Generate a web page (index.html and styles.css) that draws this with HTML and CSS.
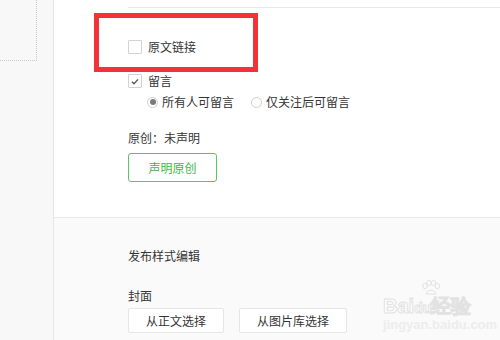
FILE: index.html
```html
<!DOCTYPE html>
<html lang="zh">
<head>
<meta charset="utf-8">
<link rel="stylesheet" href="styles.css">
</head>
<body>
<div class="page">
  <aside class="side"><div class="dotbox"></div></aside>
  <main class="main">
    <div class="highlight"></div>
    <section class="top">
      <div class="rule"></div>
      <label class="row row-link"><span class="box"></span><span>原文链接</span></label>
      <label class="row row-comment"><span class="box checked"><svg viewBox="0 0 13 13" width="13" height="13"><path d="M3.2 6.8 L5.4 9 L9.8 4.2" fill="none" stroke="#555" stroke-width="1.4"/></svg></span><span>留言</span></label>
      <div class="row radios">
        <span class="radio on"></span><span class="rtext">所有人可留言</span>
        <span class="radio"></span><span class="rtext">仅关注后可留言</span>
      </div>
      <div class="row orig">原创：未声明</div>
      <button class="btn-green">声明原创</button>
    </section>
    <section class="bottom">
      <div class="row heading">发布样式编辑</div>
      <div class="row cover">封面</div>
      <div class="btns">
        <button class="btn btn-a">从正文选择</button>
        <button class="btn btn-b">从图片库选择</button>
      </div>
      <div class="watermark">
        <svg class="wm-paw" viewBox="0 0 20 16" width="20" height="16"><g fill="none" stroke="#e2e2e2" stroke-width="1"><ellipse cx="4" cy="6" rx="2.2" ry="2.8"/><ellipse cx="8" cy="3" rx="2.2" ry="2.6"/><ellipse cx="12.5" cy="3" rx="2.2" ry="2.6"/><ellipse cx="16.3" cy="6" rx="2.2" ry="2.8"/><path d="M5 14 C6 9 14 9 15 14 Z"/></g></svg>
        <span class="wm-logo">Bai<span class="wm-du">du</span>经验</span>
        <span class="wm-url">jingyan.baidu.com</span>
      </div>
    </section>
  </main>
</div>
</body>
</html>
```

FILE: styles.css
```css
* { box-sizing: border-box; }
html, body { margin: 0; padding: 0; }
body {
  width: 500px;
  height: 340px;
  overflow: hidden;
  font-family: "Noto Sans CJK SC", "Noto Sans", sans-serif;
  font-size: 12px;
  color: #353535;
  background: #fff;
}
.page { display: flex; height: 340px; }
.side {
  width: 54px;
  flex: none;
  background: #f8f8f8;
  border-right: 1px solid #e6e6e6;
}
.dotbox {
  width: 37px;
  height: 61px;
  border-right: 1px dotted #c8c8c8;
  border-bottom: 1px dotted #c8c8c8;
}
.main {
  flex: 1;
  position: relative;
  display: flex;
  flex-direction: column;
}
.highlight {
  position: absolute;
  left: 40px;
  top: 13px;
  width: 164px;
  height: 59px;
  border: 5px solid #f2313a;
  pointer-events: none;
}
.top { padding-left: 74px; padding-bottom: 35px; background: #fff; }
.rule { margin-top: 7px; height: 1px; background: #e8e8e8; }
.row {
  display: flex;
  align-items: center;
  height: 14px;
  line-height: 14px;
  white-space: nowrap;
}
.box {
  width: 14px;
  height: 14px;
  border: 1px solid #d2d2d2;
  border-radius: 1px;
  background: #fff;
  margin-right: 6px;
  display: flex;
  align-items: center;
  justify-content: center;
}
.box svg { display: block; }
.row-link { margin-top: 32px; }
.row-comment { margin-top: 20px; }
.radios { margin-top: 7px; padding-left: 19px; }
.radio {
  width: 11px;
  height: 11px;
  border: 1px solid #d0d0d0;
  border-radius: 50%;
  background: #fff;
  margin-right: 4px;
  display: flex;
  align-items: center;
  justify-content: center;
}
.radio.on::after {
  content: "";
  width: 6px;
  height: 6px;
  border-radius: 50%;
  background: #7a7a7a;
}
.rtext { margin-right: 17px; }
.orig { margin-top: 22px; }
.btn-green {
  margin-top: 8px;
  width: 89px;
  height: 29px;
  border: 1px solid #5cc563;
  border-radius: 3px;
  background: #fff;
  color: #44b549;
  font-family: inherit;
  font-size: 12px;
  padding: 0;
}
.bottom {
  flex: 1;
  position: relative;
  background: #fafafa;
  border-top: 1px solid #e8e8e8;
  padding-left: 74px;
}
.heading { margin-top: 31px; }
.cover { margin-top: 26px; }
.btns { display: flex; gap: 15px; margin-top: 5px; }
.btn {
  height: 25px;
  border: 1px solid #e6e6e6;
  border-radius: 2px;
  background: #fff;
  color: #353535;
  font-family: inherit;
  font-size: 12px;
  padding: 0;
}
.btn-a { width: 96px; }
.btn-b { width: 108px; }
.watermark {
  position: absolute;
  left: 329px;
  top: 62px;
  display: flex;
  flex-direction: column;
  align-items: flex-start;
  pointer-events: none;
}
.wm-paw { display: block; margin-left: 38px; }
.wm-logo {
  font-family: "Liberation Sans", sans-serif;
  font-size: 20px;
  font-weight: bold;
  line-height: 20px;
  color: #fff;
  -webkit-text-stroke: 1px #e2e2e2;
}
.wm-du { font-size: 14px; }
.wm-url {
  font-family: "Liberation Sans", sans-serif;
  font-size: 13px;
  line-height: 13px;
  font-weight: bold;
  color: #ededed;
}
```
